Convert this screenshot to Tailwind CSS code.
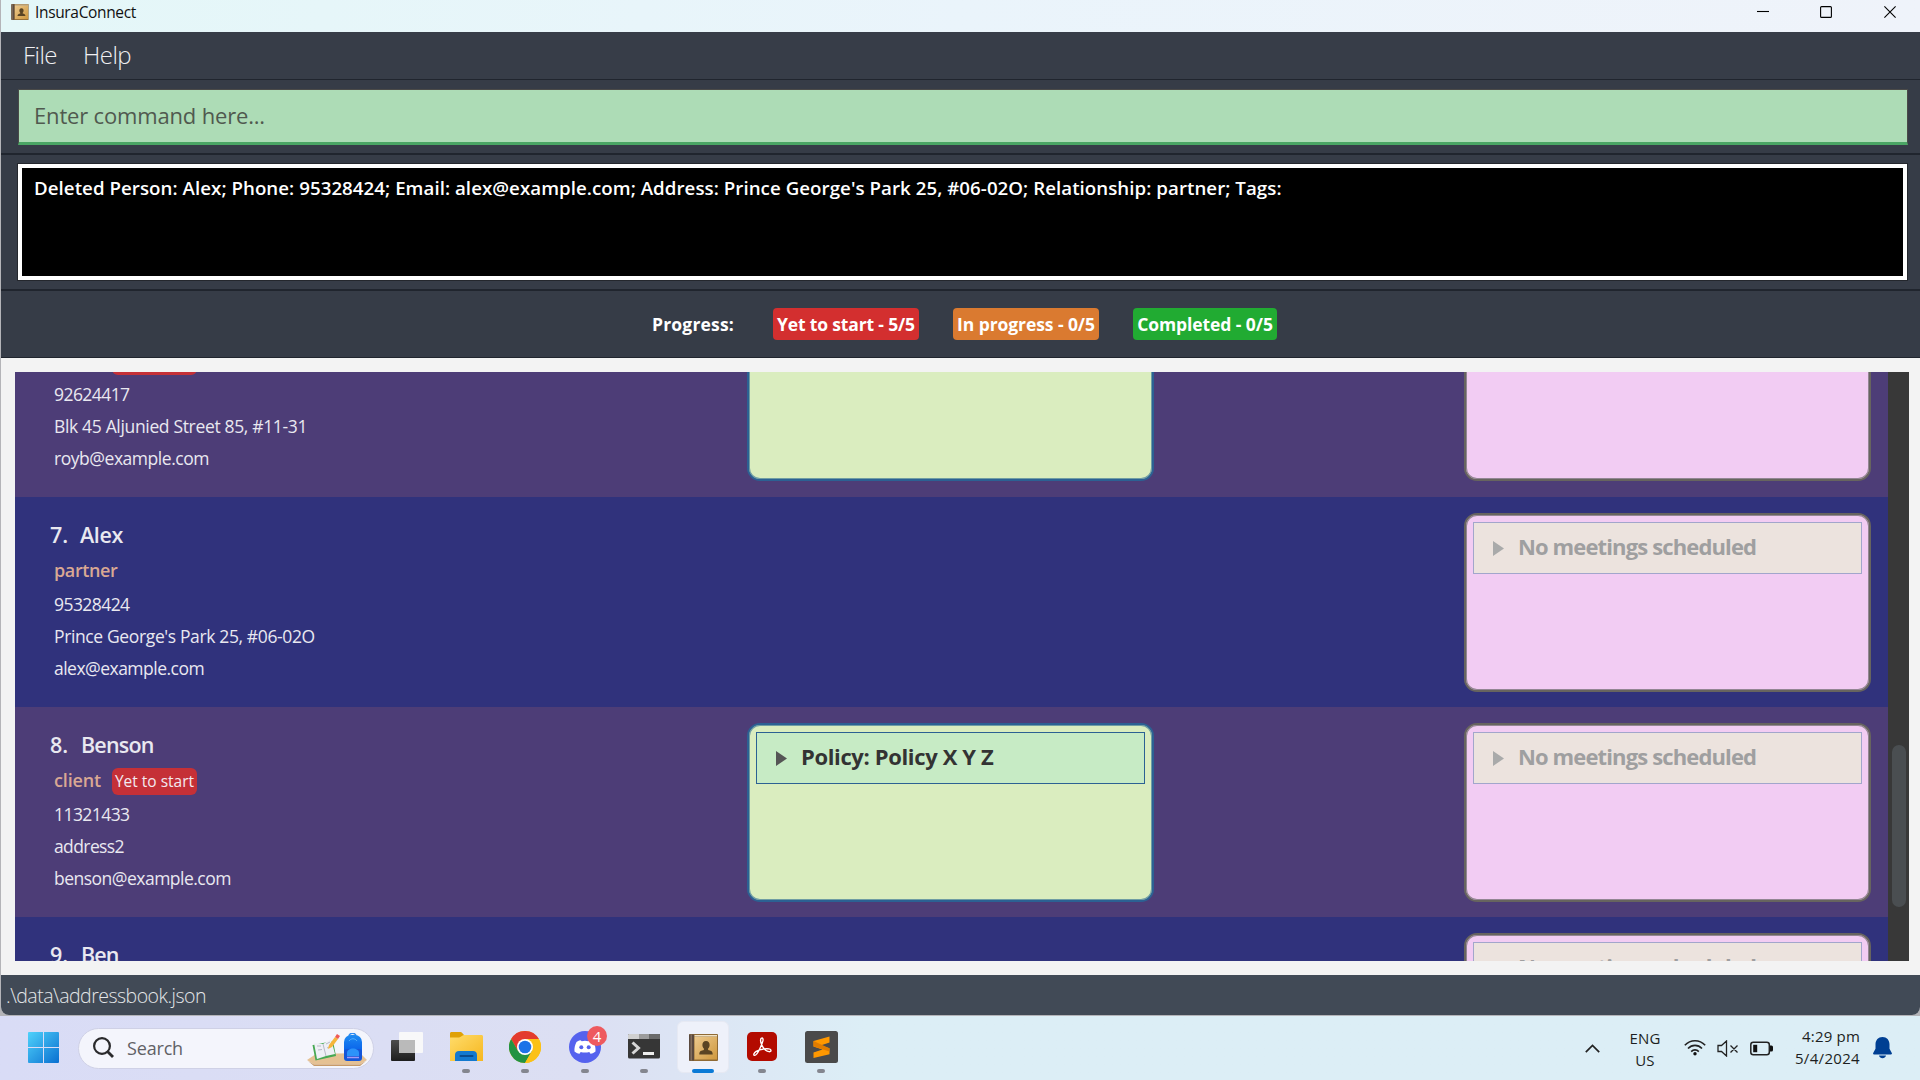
<!DOCTYPE html>
<html lang="en">
<head>
<meta charset="utf-8">
<title>InsuraConnect</title>
<script src="https://cdn.jsdelivr.net/npm/@tailwindcss/browser@4"></script>
</head>
<body class="w-[1920px] h-[1080px] overflow-hidden bg-[#dcdff5] font-['Open_Sans','Noto_Sans',sans-serif] whitespace-nowrap">
<svg class="absolute size-0">
  <defs><linearGradient id="bk" x1="0" y1="0" x2="1" y2="1"><stop offset="0" stop-color="#ecc98d"/><stop offset="1" stop-color="#cf983e"/></linearGradient></defs>
  <symbol id="book" viewBox="0 0 29 27">
    <rect x="0" y="0" width="29" height="27" rx="1" fill="#8f6a35"/>
    <rect x="5.5" y="1" width="22.5" height="1.6" fill="#f3e3c2"/>
    <rect x="5.5" y="3" width="22.5" height="22.5" fill="url(#bk)"/>
    <rect x="0" y="0.5" width="5" height="26" fill="#5b4a3f"/><rect x="1.6" y="0.5" width="1.2" height="26" fill="#8b7767"/>
    <path d="M17 7c2.600 0 3.600 1.900 3.600 4 0 1.700-.7 2.700-1.500 3.600v1.400c2.400.4 4.600 1 4.600 4.400H10.300c0-3.400 2.200-4 4.600-4.400v-1.400c-.8-.9-1.500-1.900-1.500-3.600 0-2.100 1-4 3.600-4z" fill="#5a4423"/>
  </symbol>
</svg>
<div class="w-[1920px] h-[1080px] flex flex-col">
  <div class="h-[1016px] bg-[#b4b4b8] pl-px pb-px">
  <div class="h-[1015px] rounded-b-lg overflow-hidden flex flex-col bg-[#f3f3f3]">
    <header class="h-8 shrink-0 flex items-start bg-linear-to-r from-[#e4f7f8] via-[#eaf4fb] to-[#eff3fa]">
      <svg class="ml-[10px] mt-1 w-[18px] h-4"><use href="#book"/></svg>
      <span class="ml-1.5 text-[15.500px] leading-6 tracking-[-0.340px] text-[#111]">InsuraConnect</span>
      <svg class="ml-auto mr-[24px] mt-1.5 w-[139px] h-3" fill="none" stroke="#000" stroke-width="1.100"><path d="M0 5.500h12"/><rect x="63.600" y=".6" width="10.800" height="10.800" rx="1"/><path d="M127.400.4l11.200 11.200M138.600.4l-11.200 11.200"/></svg>
    </header>
    <nav class="h-[47px] shrink-0 bg-[#373d48] flex items-center gap-[26px] pl-[22px] text-[24px] font-light text-[#f0f0f2] leading-8 tracking-[-0.520px]">
      <span class="-mt-px">File</span><span class="-mt-px">Help</span>
    </nav>
    <section class="h-[75px] shrink-0 bg-[#363c47] border-t border-b border-[#20252e] pt-[9px] pl-[17px] pr-[12px]">
      <div class="h-[56px] bg-[#addcb6] border border-b-[3px] border-[#4a4a48] border-b-[#4aa564] pl-[15px] flex items-center text-[22px] tracking-[-0.170px] text-[#50594f]"><span class="-mt-px">Enter command here...</span></div>
    </section>
    <section class="h-[136px] shrink-0 bg-[#363c47] border-t border-b border-[#20252e] pt-[8px] pl-[16px] pr-[12px]">
      <div class="h-[118px] bg-black border border-[#24272d]">
        <div class="h-[116px] border-4 border-white pl-[12px] text-[18.700px] leading-10 font-semibold tracking-[0.050px] text-white">Deleted Person: Alex; Phone: 95328424; Email: alex@example.com; Address: Prince George's Park 25, #06-02O; Relationship: partner; Tags:</div>
      </div>
    </section>
    <section class="h-[68px] shrink-0 bg-[#363c47] border-t border-b border-[#20252e] flex items-center pl-[651px] text-[17.500px] font-bold text-white">
      <span class="w-[121px] tracking-[0.180px]">Progress:</span>
      <span class="w-[146px] h-8 mr-[34px] rounded bg-[#d32f2f] flex items-center justify-center tracking-[-0.160px]">Yet to start - 5/5</span>
      <span class="w-[146px] h-8 mr-[34px] rounded bg-[#da7a30] flex items-center justify-center tracking-[-0.080px]">In progress - 0/5</span>
      <span class="w-[144px] h-8 rounded bg-[#21ab32] flex items-center justify-center tracking-[-0.080px]">Completed - 0/5</span>
    </section>
    <main class="h-[617px] shrink-0 p-[14px] pr-[11px] flex">
      <div class="w-[1873px] h-[589px] overflow-hidden flex flex-col justify-start text-[#e9e8f0] text-[17.500px]">
        <article class="h-[125px] shrink-0 bg-[#4d3d77] flex flex-col justify-end overflow-hidden">
          <div class="h-[210px] shrink-0 flex pt-4">
            <div class="w-[732px] pl-[39px] pt-1">
              <div class="h-[34px]"></div>
              <div class="h-[37px] flex items-center"><span class="w-[85px] h-[27px] rounded-md bg-[#c53037] mt-[3px] ml-[58px]"></span></div>
              <div class="leading-8"><p class="tracking-[-0.560px]">92624417</p><p class="tracking-[-0.340px]">Blk 45 Aljunied Street 85, #11-31</p><p class="tracking-[-0.460px]">royb@example.com</p></div>
            </div>
            <div class="w-[407px] h-[178px] rounded-[13px] border-2 border-[#2c6193] bg-[#daedbf] inset-shadow-[0_0_0_1px_#6f9da3]"></div>
            <div class="w-[407px] h-[178px] ml-[310px] rounded-[13px] border-2 border-[#67645f] bg-[#f2ccf3] inset-shadow-[0_0_0_1px_#938693]"></div>
          </div>
        </article>
        <article class="h-[210px] shrink-0 bg-[#30327c] flex pt-4">
          <div class="w-[732px] pl-[35px] pt-1">
            <div class="h-[34px] text-[21.500px] leading-[36px] font-semibold flex"><span class="w-[30px]">7.</span><span class="tracking-[-0.360px]">Alex</span></div>
            <div class="h-[37px] pt-px pl-1 flex items-center text-[18px] text-[#d9a893] font-semibold tracking-[-0.370px]">partner</div>
            <div class="leading-8 pl-1"><p class="tracking-[-0.560px]">95328424</p><p class="tracking-[-0.370px]">Prince George's Park 25, #06-02O</p><p class="tracking-[-0.520px]">alex@example.com</p></div>
          </div>
          <div class="w-[407px] h-[179px] ml-[717px] rounded-[13px] border-2 border-[#67645f] bg-[#f2ccf3] inset-shadow-[0_0_0_1px_#938693] p-[7px]">
            <div class="h-[52px] border border-[#a2a6cb] bg-[#ece3de] flex items-center pl-[19px] gap-[15px] text-[22px] font-bold text-[#9f9fa0]"><svg class="w-[11px] h-[15px]"><path d="M0 0l11 7.500L0 15z" fill="#a9aaaa"/></svg><span class="-mt-[3px] -ml-px tracking-[-0.870px]">No meetings scheduled</span></div>
          </div>
        </article>
        <article class="h-[210px] shrink-0 bg-[#4d3d77] flex pt-4">
          <div class="w-[732px] pl-[35px] pt-1">
            <div class="h-[34px] text-[21.500px] leading-[36px] font-semibold flex"><span class="w-[31px]">8.</span><span class="tracking-[-0.800px]">Benson</span></div>
            <div class="h-[37px] pt-px pl-1 flex items-center text-[18px] text-[#d9a893] font-semibold"><span class="w-[58px] tracking-[-0.150px]">client</span><span class="w-[85px] h-[27px] rounded-md bg-[#c53037] mt-[3px] flex items-center justify-center text-[15.500px] font-normal text-[#f3eaf0]">Yet to start</span></div>
            <div class="leading-8 pl-1"><p class="tracking-[-0.560px]">11321433</p><p class="tracking-[-0.600px]">address2</p><p class="tracking-[-0.510px]">benson@example.com</p></div>
          </div>
          <div class="w-[407px] h-[179px] rounded-[13px] border-2 border-[#2c6193] bg-[#daedbf] inset-shadow-[0_0_0_1px_#6f9da3] p-[7px]">
            <div class="h-[52px] border border-[#2c6193] bg-[#c7ebc5] flex items-center pl-[19px] gap-[15px] text-[22px] font-bold text-[#333]"><svg class="w-[11px] h-[15px]"><path d="M0 0l11 7.500L0 15z" fill="#555"/></svg><span class="-mt-[3px] -ml-px tracking-[-0.360px]">Policy: Policy X Y Z</span></div>
          </div>
          <div class="w-[407px] h-[179px] ml-[310px] rounded-[13px] border-2 border-[#67645f] bg-[#f2ccf3] inset-shadow-[0_0_0_1px_#938693] p-[7px]">
            <div class="h-[52px] border border-[#a2a6cb] bg-[#ece3de] flex items-center pl-[19px] gap-[15px] text-[22px] font-bold text-[#9f9fa0]"><svg class="w-[11px] h-[15px]"><path d="M0 0l11 7.500L0 15z" fill="#a9aaaa"/></svg><span class="-mt-[3px] -ml-px tracking-[-0.870px]">No meetings scheduled</span></div>
          </div>
        </article>
        <article class="h-[210px] shrink-0 bg-[#30327c] flex pt-4">
          <div class="w-[732px] pl-[35px] pt-1">
            <div class="h-[34px] text-[21.500px] leading-[36px] font-semibold flex"><span class="w-[31px]">9.</span><span class="tracking-[-0.900px]">Ben</span></div>
          </div>
          <div class="w-[407px] h-[179px] ml-[717px] rounded-[13px] border-2 border-[#67645f] bg-[#f2ccf3] inset-shadow-[0_0_0_1px_#938693] p-[7px]">
            <div class="h-[52px] border border-[#a2a6cb] bg-[#ece3de] flex items-center pl-[19px] gap-[15px] text-[22px] font-bold text-[#9f9fa0]"><span class="w-[11px]"></span><span class="-mt-[3px] -ml-px tracking-[-0.870px]">No meetings scheduled</span></div>
          </div>
        </article>
      </div>
      <div class="w-[21px] h-[589px] bg-[#383838] pt-[373px] pl-1"><div class="w-[14px] h-[162px] rounded-full bg-[#4a4e51]"></div></div>
    </main>
    <footer class="h-10 shrink-0 bg-[#414a56] pl-[5px] pt-0.5 flex items-center text-[19.500px] font-light tracking-[-0.510px] text-[#e4e6e8]">.\data\addressbook.json</footer>
  </div>
  </div>

  <div class="h-16 flex items-center bg-linear-to-r from-[#d9dcf6] from-0% via-[#dcdff3] via-30% to-[#dceef6] to-45%">
    <svg class="ml-[28px] w-[31px] h-[31px] -mt-px" viewBox="0 0 31 31"><defs><linearGradient id="w" x1="0" y1="0" x2="1" y2="1"><stop offset="0" stop-color="#4fd2fb"/><stop offset="1" stop-color="#0a6fd0"/></linearGradient></defs><path fill="url(#w)" d="M1 0h14v15H0V1a1 1 0 0 1 1-1zM16 0h14a1 1 0 0 1 1 1v14H16zM0 16h15v15H1a1 1 0 0 1-1-1zM16 16h15v14a1 1 0 0 1-1 1H16z"/></svg>
    <div class="ml-[19px] w-[296px] h-[41px] rounded-full bg-[#f4f5fc] border border-[#cfd1e6] flex items-center">
      <svg class="ml-[14px] w-[21px] h-[21px] -mt-px" fill="none" stroke="#2a2a2c" stroke-width="2.200"><circle cx="9" cy="9" r="7.900"/><path d="M14.500 14.500l5.500 5.500" stroke-width="2.800"/></svg>
      <span class="ml-[13px] w-[180px] text-[18px] tracking-[-0.170px] text-[#616166]">Search</span>
      <svg class="w-[60px] h-[34px] mt-1" viewBox="0 0 60 34">
        <defs><linearGradient id="bp" x1="0" y1="0" x2="0" y2="1"><stop offset="0" stop-color="#1e8bf2"/><stop offset=".6" stop-color="#0a63ea"/><stop offset="1" stop-color="#1b3fb8"/></linearGradient></defs>
        <path d="M0 27l9-6 44-1 7 7-7 4.500H7z" fill="#e5c193"/><path d="M1 28l6 3.500h46l6-3.500-6 5H7z" fill="#c79a68"/>
        <path d="M5.500 12l3 15.500L29 23 26 8l-20 4z" fill="#46a853"/><path d="M7 10l9 1 8-5 4 15-9 2-9 3z" fill="#eef0f6"/><path d="M16 11l3 12M10 13l4 0M11 17l4-.5M19 11l4-2M20 15l4-2" stroke="#aab" stroke-width=".8" fill="none"/>
        <path d="M21 16l1-4 6-8 3 2-6 8z" fill="#f6b53b"/><path d="M28 4l2-3 3 2-2 3z" fill="#ef5a55"/>
        <path d="M42 4c0-5 7-5 7 0" fill="none" stroke="#2f8bf0" stroke-width="1.500"/><rect x="37" y="2" width="18" height="26" rx="7" fill="url(#bp)"/><rect x="37" y="16" width="18" height="12" rx="3" fill="#1556d8"/><path d="M40 23v-3c0-6 12-6 12 0v3z" fill="#2c93fa"/><path d="M40 24.500h12" stroke="#a59af5" stroke-width="1.500"/><path d="M42 8c2-3 6-3 8 0" stroke="#54b0ff" fill="none"/>
      </svg>
    </div>
    <div class="ml-[3.500px] flex h-16 pt-[15px] *:w-[59.200px]">
      <div class="flex justify-center"><svg class="w-8 h-[31px]"><defs><linearGradient id="tv" x1="0" y1="0" x2="0" y2="1"><stop offset="0" stop-color="#4c4c4c"/><stop offset="1" stop-color="#1d1d1d"/></linearGradient></defs><rect x="0" y="9" width="24" height="21" rx="1" fill="url(#tv)"/><rect x="8" y="1" width="24" height="21" rx="1" fill="#f8f8f9"/><path d="M8 9h16v13H8z" fill="#bababa"/></svg></div>
      <div class="flex flex-col items-center"><svg class="w-[33px] h-8" ><defs><linearGradient id="fo" x1="0" y1="0" x2="1" y2="1"><stop offset="0" stop-color="#ffdc6b"/><stop offset="1" stop-color="#f6b71f"/></linearGradient></defs><path d="M0 8V2.500C0 1.600.6 1 1.500 1H10c1 0 1.600.3 2.200 1L14 4v4z" fill="#dfa106"/><path d="M0 6.500h9c2 0 3-2.500 5-2.500h17.500c.9 0 1.500.6 1.500 1.500V30H0z" fill="url(#fo)"/><path d="M5 30v-6c0-2.500 1.500-4 4-4h14c2.500 0 4 1.500 4 4v6z" fill="#1379cf"/><path d="M10.500 25h12" stroke="#0a4c8e" stroke-width="2" stroke-linecap="round"/></svg><i class="w-2 h-1 mt-[6px] rounded-full bg-[#84868f]"></i></div>
      <div class="flex flex-col items-center"><svg class="w-8 h-8" viewBox="-16 -16 32 32"><circle r="16" fill="#fbc116"/><path d="M-13.860-8A16 16 0 0 1 13.860-8H0L-6.930 4z" fill="#e33b2e"/><path d="M-13.860-8A16 16 0 0 0 0 16L6.930 4H-6.930z" fill="#229342"/><path d="M0 16A16 16 0 0 0 13.860-8H0L6.930 4z" fill="#fbc116"/><circle r="8" fill="#fff"/><circle r="6.300" fill="#1d73e8"/></svg><i class="w-2 h-1 mt-[6px] rounded-full bg-[#84868f]"></i></div>
      <div class="flex flex-col items-center relative"><svg class="w-8 h-8"><circle cx="16" cy="16" r="16" fill="#5562ee"/><path d="M11.500 9.300l1.300.9a14 14 0 0 1 6.400 0l1.300-.9c1.800.3 3 .9 4 1.700 1.500 3 2.300 6 2 9.500-1.400 1.200-3 1.900-5 2.300l-1.200-1.900a14 14 0 0 1-8.600 0l-1.200 1.900c-2-.4-3.600-1.100-5-2.300-.3-3.500.5-6.500 2-9.500 1-.8 2.200-1.400 4-1.700z" fill="#fff"/><circle cx="12.300" cy="16.300" r="2" fill="#5562ee"/><circle cx="19.700" cy="16.300" r="2" fill="#5562ee"/></svg><i class="w-2 h-1 mt-[6px] rounded-full bg-[#84868f]"></i><span class="absolute left-[32px] -top-[5px] size-5 rounded-full bg-[#ee5a5e] text-white text-[15px] leading-5 text-center">4</span></div>
      <div class="flex flex-col items-center"><svg class="w-8 h-8"><path d="M1 3h30a1 1 0 0 1 1 1v22a1.500 1.500 0 0 1-1.500 1.500h-29A1.500 1.500 0 0 1 0 26V4a1 1 0 0 1 1-1z" fill="#363636"/><path d="M0 4a1 1 0 0 1 1-1h10v5H0z" fill="#d0d0d0"/><path d="M11 3h10.500v5H11z" fill="#9c9c9c"/><path d="M21.500 3H31a1 1 0 0 1 1 1v4H21.500z" fill="#6b6b6b"/><path d="M4.500 11.500l6 5.500-6 5.500" fill="none" stroke="#d8d8d8" stroke-width="3"/><path d="M15 22.500h11" stroke="#eee" stroke-width="3"/></svg><i class="w-2 h-1 mt-[6px] rounded-full bg-[#84868f]"></i></div>
      <div class="flex justify-center"><div class="w-[52px] h-[52px] -mt-[10px] rounded-md bg-[#eef1fa] border border-[#e6e9f3] flex flex-col items-center"><svg class="mt-[12px] w-[29px] h-[27px] shrink-0"><use href="#book"/></svg><i class="mt-[8px] w-[22px] h-1 shrink-0 rounded-full bg-[#0b7ad6]"></i></div></div>
      <div class="flex flex-col items-center"><svg class="w-[30px] h-8"><rect y="1" width="30" height="29" rx="5" fill="#b30b00"/><path d="M15 7c-2 0-1.600 3.400-.6 6 .9 2.500 2.300 4.700 4.200 6.300 2 1.600 5.400 2 5.400.2 0-1.700-3.400-2-6.600-1.600-3.300.3-6.300 1.200-8.200 2.500-2.300 1.600-3 3.500-1.800 3.900 1.600.5 3.600-2.600 5.400-6.500 1.500-3.300 2.800-6.500 3.200-8.400.2-1.400-.2-2.400-1-2.400z" fill="none" stroke="#fff" stroke-width="1.400"/></svg><i class="w-2 h-1 mt-[6px] rounded-full bg-[#84868f]"></i></div>
      <div class="flex flex-col items-center"><svg class="w-[33px] h-8"><rect width="33" height="32" rx="2.500" fill="#4a4a4a"/><path d="M24.500 5.500v6l-9 3 9 2.800v6L8.500 27v-5.500l9-3-9-3V10z" fill="#ff9800"/><path d="M8.500 10v5.500l16 5-.1-3.200z" fill="#e07c00"/></svg><i class="w-2 h-1 mt-[6px] rounded-full bg-[#84868f]"></i></div>
    </div>
    <div class="ml-auto mr-[28px] flex items-center text-[15px] leading-[22px] text-[#1d1f22]">
      <svg class="w-[15px] h-[9px]" fill="none" stroke="#222" stroke-width="1.700"><path d="M.8 8.200l6.700-6.700 6.700 6.700"/></svg>
      <div class="ml-5 w-[50px] text-center mt-0.5 tracking-[0.200px]">ENG<br>US</div>
      <svg class="ml-[14px] w-[22px] h-[17px] -mt-px" fill="none" stroke="#222" stroke-width="1.600"><path d="M.8 6.300c5.700-6 14.700-6 20.400 0M4 9.500c4-4.200 10-4.200 14 0M7.200 12.600c2.200-2.300 5.400-2.300 7.600 0"/><circle cx="11" cy="14.800" r="1.700" fill="#111" stroke="none"/></svg>
      <svg class="ml-[11px] w-[22px] h-[17px]" fill="none" stroke="#222" stroke-width="1.300"><path d="M1 5.500h3.500L9.500 1v15l-5-4.500H1zM13.500 5.500l7 7M20.500 5.500l-7 7"/></svg>
      <svg class="ml-[11px] w-[23px] h-[15px]"><rect x=".8" y="1.300" width="18.500" height="12.400" rx="2.500" fill="none" stroke="#222" stroke-width="1.500"/><rect x="3.200" y="3.800" width="4" height="7.400" fill="#111"/><path d="M20 4.500h1.500a1.500 1.500 0 0 1 1.500 1.500v3a1.500 1.500 0 0 1-1.500 1.500H20z" fill="#111"/></svg>
      <div class="w-[87px] text-right -mt-0.5"><span class="tracking-[0.190px]">4:29 pm</span><br><span class="tracking-[0.320px]">5/4/2024</span></div>
      <svg class="ml-[13px] w-[19px] h-[22px]" fill="#003f93"><path d="M9.500 0c4.300 0 7 3.200 7 7.300v4.500l2.300 4.200c.4.800 0 1.500-.9 1.500H1.100c-.9 0-1.300-.7-.9-1.500l2.300-4.200V7.300C2.500 3.200 5.200 0 9.500 0z"/><path d="M6 18.500h7c-.5 1.700-1.800 2.800-3.500 2.800S6.500 20.200 6 18.500z"/></svg>
    </div>
  </div>
</div>
</body>
</html>
